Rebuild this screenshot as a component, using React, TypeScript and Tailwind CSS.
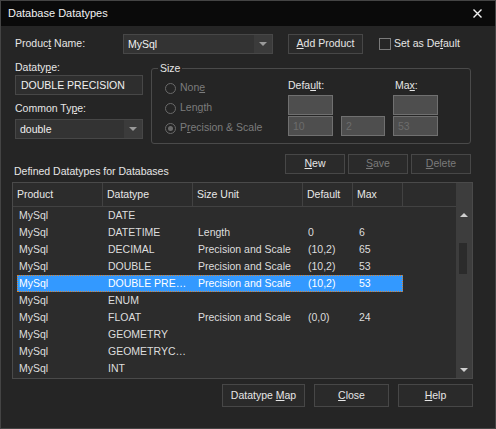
import type { ReactNode } from "react";

type Row = [string, string, string, string, string];

const rows: Row[] = [
  ["MySql", "DATE", "", "", ""],
  ["MySql", "DATETIME", "Length", "0", "6"],
  ["MySql", "DECIMAL", "Precision and Scale", "(10,2)", "65"],
  ["MySql", "DOUBLE", "Precision and Scale", "(10,2)", "53"],
  ["MySql", "DOUBLE PRE…", "Precision and Scale", "(10,2)", "53"],
  ["MySql", "ENUM", "", "", ""],
  ["MySql", "FLOAT", "Precision and Scale", "(0,0)", "24"],
  ["MySql", "GEOMETRY", "", "", ""],
  ["MySql", "GEOMETRYC…", "", "", ""],
  ["MySql", "INT", "", "", ""],
];

const SELECTED = 4;

const Btn = ({
  children,
  className = "",
  disabled = false,
}: {
  children: ReactNode;
  className?: string;
  disabled?: boolean;
}) => (
  <div
    className={`flex items-center justify-center border border-[#474747] bg-[#2a2a2a] ${
      disabled ? "text-[#7a7a7a]" : "text-[#e6e6e6]"
    } ${className}`}
  >
    {children}
  </div>
);

const Arrow = ({ down = true, color = "#9a9a9a" }: { down?: boolean; color?: string }) => (
  <svg width="8" height="4" viewBox="0 0 8 4">
    <path d={down ? "M0 0 L8 0 L4 4 Z" : "M0 4 L8 4 L4 0 Z"} fill={color} />
  </svg>
);

const Combo = ({ value, className = "" }: { value: string; className?: string }) => (
  <div className={`flex h-[20px] border border-[#474747] bg-[#333333] ${className}`}>
    <span className="flex-1 pl-[4px] leading-[18px] text-[#f0f0f0]">{value}</span>
    <div className="flex w-[18px] items-center justify-center bg-[#3b3b3b]">
      <Arrow />
    </div>
  </div>
);

const Radio = ({ label, checked = false }: { label: ReactNode; checked?: boolean }) => (
  <div className="flex h-[20px] items-center gap-[4px] text-[#7c7c7c]">
    <div className="flex h-[11px] w-[11px] items-center justify-center rounded-full border border-[#6a6a6a]">
      {checked && <div className="h-[5px] w-[5px] rounded-full bg-[#6a6a6a]" />}
    </div>
    <span>{label}</span>
  </div>
);

const Box = ({ value = "" }: { value?: string }) => (
  <div className="h-[20px] border border-[#707070] bg-[#4e4e4e] pl-[4px] leading-[18px] text-[#6c6c6c]">
    {value}
  </div>
);

export default function App() {
  return (
    <div className="flex h-[429px] w-[496px] flex-col border border-[#444444] bg-[#252525] font-['Liberation_Sans',Arial,sans-serif] text-[10.5px] text-[#e6e6e6]">
      {/* title bar */}
      <div className="flex h-[25px] items-center justify-between bg-[#0a0a0a] pl-[7px] pr-[13px]">
        <span className="text-[11px] text-[#f2f2f2]">Database Datatypes</span>
        <svg width="9" height="9" viewBox="0 0 9 9">
          <path d="M0.5 0.5 L8.5 8.5 M8.5 0.5 L0.5 8.5" stroke="#f2f2f2" strokeWidth="1.4" />
        </svg>
      </div>

      <div className="flex flex-col pl-[11px] pr-[22px]">
        {/* product row */}
        <div className="mt-[8px] flex h-[20px] items-center">
          <span className="ml-[3px] w-[108px]">
            Produc<u>t</u> Name:
          </span>
          <Combo value="MySql" className="w-[150px]" />
          <Btn className="ml-[15px] h-[20px] w-[75px]">
            <span>
              <u>A</u>dd Product
            </span>
          </Btn>
          <div className="ml-[16px] h-[12px] w-[12px] border border-[#7a7a7a] bg-[#262626]" />
          <span className="ml-[3px]">
            Set as De<u>f</u>ault
          </span>
        </div>

        {/* datatype + size */}
        <div className="mt-[6px] flex">
          <div className="ml-[3px] flex w-[128px] flex-col">
            <span className="h-[15px] leading-[15px]">
              Dataty<u>p</u>e:
            </span>
            <div className="h-[20px] border border-[#474747] bg-[#2e2e2e] pl-[5px] leading-[18px] text-[#f0f0f0]">
              DOUBLE PRECISION
            </div>
            <span className="mt-[6px] h-[15px] leading-[15px]">
              Common Ty<u>p</u>e:
            </span>
            <Combo value="double" className="mt-[3px]" />
          </div>

          <div className="relative ml-[8px] mt-[8px] h-[76px] w-[320px] rounded-[3px] border border-[#4a4a4a]">
            <span className="absolute left-[6px] top-[-8px] bg-[#252525] px-[2px] leading-[14px]">Size</span>
            <div className="flex pl-[13px] pt-[9px]">
              <div className="flex w-[123px] flex-col">
                <Radio
                  label={
                    <>
                      Non<u>e</u>
                    </>
                  }
                />
                <Radio
                  label={
                    <>
                      Len<u>g</u>th
                    </>
                  }
                />
                <Radio
                  checked
                  label={
                    <>
                      P<u>r</u>ecision &amp; Scale
                    </>
                  }
                />
              </div>
              <div className="grid grid-cols-[45px_44px_45px] grid-rows-[16px_20px_20px] gap-x-[8px] gap-y-[1px]">
                <span className="leading-[15px]">
                  Defa<u>u</u>lt:
                </span>
                <span />
                <span className="pl-[2px] leading-[15px]">
                  Ma<u>x</u>:
                </span>
                <Box />
                <span />
                <Box />
                <Box value="10" />
                <Box value="2" />
                <Box value="53" />
              </div>
            </div>
          </div>
        </div>

        {/* list caption + buttons */}
        <div className="mt-[10px] flex h-[24px] items-start justify-between">
          <span className="ml-[2px] mt-[10px] leading-[14px]">Defined Datatypes for Databases</span>
          <div className="mr-[2px] flex gap-[3px]">
            <Btn className="h-[20px] w-[60px]">
              <span>
                <u>N</u>ew
              </span>
            </Btn>
            <Btn disabled className="h-[20px] w-[60px]">
              <span>
                <u>S</u>ave
              </span>
            </Btn>
            <Btn disabled className="h-[20px] w-[60px]">
              <span>
                <u>D</u>elete
              </span>
            </Btn>
          </div>
        </div>

        {/* list */}
        <div className="mt-[4px] flex h-[197px] w-[461px] border border-[#4a4a4a] bg-[#2c2c2c]">
          <div className="flex flex-1 flex-col">
            <div className="flex h-[24px] border-b border-[#424242] text-[#e8e8e8]">
              <div className="flex w-[90px] items-center border-r border-[#424242] pl-[4px]">Product</div>
              <div className="flex w-[90px] items-center border-r border-[#424242] pl-[4px]">Datatype</div>
              <div className="flex w-[110px] items-center border-r border-[#424242] pl-[4px]">Size Unit</div>
              <div className="flex w-[50px] items-center border-r border-[#424242] pl-[4px]">Default</div>
              <div className="flex w-[50px] items-center border-r border-[#424242] pl-[4px]">Max</div>
              <div className="flex-1" />
            </div>
            {rows.map((r, i) => (
              <div
                key={i}
                className={`ml-[4px] flex h-[17px] w-[386px] items-center text-[#dedede] ${
                  i === SELECTED ? "bg-[#3399ff] text-white outline outline-1 outline-dotted outline-offset-[-1px] outline-[#d9822b]" : ""
                }`}
              >
                <span className="w-[86px] pl-[2px]">{r[0]}</span>
                <span className="w-[90px] pl-[5px]">{r[1]}</span>
                <span className="w-[110px] pl-[5px]">{r[2]}</span>
                <span className="w-[50px] pl-[5px]">{r[3]}</span>
                <span className="w-[50px] pl-[6px]">{r[4]}</span>
              </div>
            ))}
          </div>
          <div className="flex w-[16px] flex-col bg-[#3d3d3d]">
            <div className="h-[24px]" />
            <div className="flex h-[16px] items-center justify-center">
              <Arrow down={false} color="#cfcfcf" />
            </div>
            <div className="flex-1">
              <div className="ml-[3px] mt-[20px] h-[31px] w-[8px] bg-[#2b2b2b]" />
            </div>
            <div className="flex h-[16px] items-center justify-center">
              <Arrow color="#cfcfcf" />
            </div>
          </div>
        </div>

        {/* bottom buttons */}
        <div className="mt-[5px] flex justify-end gap-[9px]">
          <Btn className="h-[23px] w-[83px]">
            <span>
              Datatype <u>M</u>ap
            </span>
          </Btn>
          <Btn className="h-[23px] w-[75px]">
            <span>
              <u>C</u>lose
            </span>
          </Btn>
          <Btn className="h-[23px] w-[75px]">
            <span>
              <u>H</u>elp
            </span>
          </Btn>
        </div>
      </div>
    </div>
  );
}
